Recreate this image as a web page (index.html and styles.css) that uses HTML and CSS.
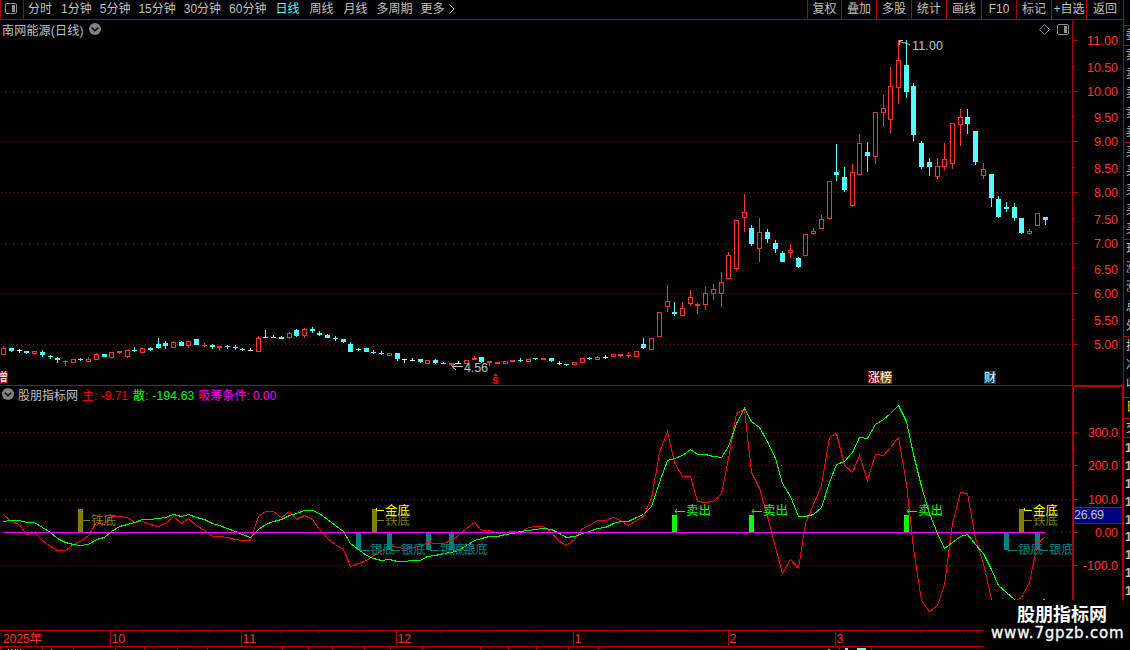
FILE: index.html
```html
<!DOCTYPE html>
<html lang="zh-CN">
  <head>
    <meta charset="UTF-8" />
    <meta name="viewport" content="width=device-width, initial-scale=1.0" />
    <title>南网能源(日线)</title>
    <link rel="stylesheet" href="styles.css">
  </head>
  <body>
    <div class="terminal">
      <div class="main">
        <header class="toolbar">
          <div class="panel-toggle">
            <svg width="13" height="11" viewBox="0 0 13 11">
              <rect x="0.5" y="0.5" width="11" height="10" rx="1.5" fill="none" stroke="#909090" />
              <rect x="7" y="2" width="3" height="7" fill="#909090" />
            </svg>
          </div>
          <nav class="periods">
            <span class="short">分时</span>
            <span>1分钟</span>
            <span>5分钟</span>
            <span>15分钟</span>
            <span>30分钟</span>
            <span>60分钟</span>
            <span class="short active">日线</span>
            <span class="short">周线</span>
            <span class="short">月线</span>
            <span>多周期</span>
            <span>更多</span>
            <svg class="more" width="6" height="10" viewBox="0 0 6 10">
              <path d="M0.5 0.5 L5 5 L0.5 9.5" fill="none" stroke="#c0c0c0" />
            </svg>
          </nav>
          <div class="tools">
            <span>复权</span>
            <span>叠加</span>
            <span>多股</span>
            <span>统计</span>
            <span>画线</span>
            <span>F10</span>
            <span>标记</span>
            <span>+自选</span>
            <span>返回</span>
          </div>
        </header>

        <section class="pane price-pane">
          <div class="pane-title">
            <span>南网能源(日线)</span>
            <svg class="chevron" width="12" height="12" viewBox="0 0 12 12">
              <circle cx="6" cy="6" r="6" fill="#808080" />
              <path d="M2.8 4.6 L6 7.8 L9.2 4.6" fill="none" stroke="#101010" stroke-width="1.5" />
            </svg>
          </div>
          <div class="pane-tools">
            <svg width="11" height="11" viewBox="0 0 11 11">
              <path d="M5.5 0.5 L10.5 5.5 L5.5 10.5 L0.5 5.5 Z" fill="none" stroke="#808080" />
            </svg>
            <svg width="12" height="11" viewBox="0 0 12 11">
              <rect x="0.5" y="0.5" width="11" height="10" rx="1.5" fill="none" stroke="#909090" />
              <rect x="7" y="2" width="3" height="7" fill="#909090" />
            </svg>
          </div>
          <svg id="price" width="1072" height="365" viewBox="0 20 1072 365"></svg>
          <svg id="price-axis" width="51" height="365" viewBox="1072 20 51 365"></svg>
          <span class="badge zeng">增</span>
          <span class="badge zhang">涨</span>
          <span class="badge bang">榜</span>
          <span class="badge cai">财</span>
        </section>

        <section class="pane indicator-pane">
          <div class="pane-title">
            <svg class="chevron" width="12" height="12" viewBox="0 0 12 12">
              <circle cx="6" cy="6" r="6" fill="#808080" />
              <path d="M2.8 4.6 L6 7.8 L9.2 4.6" fill="none" stroke="#101010" stroke-width="1.5" />
            </svg>
            <span>股朋指标网</span>
            <span class="v-main">主: -9.71</span>
            <span class="v-retail">散: -194.63</span>
            <span class="v-cond">吸筹条件: 0.00</span>
          </div>
          <svg id="indicator" width="1072" height="244" viewBox="0 386 1072 244"></svg>
          <svg id="indicator-axis" width="52" height="245" viewBox="1072 385 52 245"></svg>
        </section>

        <footer>
          <svg id="timeline" width="1123" height="20" viewBox="0 630 1123 20"></svg>
        </footer>
      </div>

      <aside class="quote">
        <div class="group head"><span>委</span></div>
        <div class="group"><span>卖</span><span>卖</span><span>卖</span><span>卖</span><span>卖</span></div>
        <div class="group"><span>买</span><span>买</span><span>买</span><span>买</span><span>买</span></div>
        <div class="group"><span>现</span><span>涨</span><span>涨</span><span>总</span><span>外</span></div>
        <div class="group stats"><span>换</span><span>净</span><span>收</span></div>
        <div class="group tab"><span>日</span></div>
        <div class="group deal"><span>交</span></div>
        <div class="ticks"><span>1</span><span>1</span><span>1</span><span>1</span><span>1</span><span>1</span><span>1</span><span>1</span><span>1</span></div>
      </aside>

      <div class="watermark">
        <strong>股朋指标网</strong>
        <span>www.7gpzb.com</span>
      </div>
    </div>
    <script src="script.js"></script>
  </body>
</html>
```
FILE: styles.css
```css
body {
  margin: 0;
  background: #000;
  color: #c0c0c0;
  font-family: "Liberation Sans", "Noto Sans CJK SC", sans-serif;
  font-size: 12px;
}
svg {
  display: block;
  flex: none;
}
svg text {
  font-family: "Liberation Sans", "Noto Sans CJK SC", sans-serif;
}
.terminal {
  position: relative;
  display: flex;
  width: 1130px;
  height: 650px;
  overflow: hidden;
}
.main {
  width: 1123px;
  flex: none;
}

/* toolbar */
.toolbar {
  display: flex;
  height: 19px;
  line-height: 19px;
  border-bottom: 1px solid #b00000;
}
.panel-toggle {
  box-sizing: border-box;
  width: 24px;
  padding: 3px 0 0 4px;
  border-left: 1px solid #b00000;
  border-right: 1px solid #b00000;
}
.periods {
  display: flex;
  gap: 8px;
  margin-left: 3px;
}
.periods .short {
  padding: 0 1px;
}
.periods .active {
  color: #54fcfc;
}
.periods .more {
  margin: 4px 0 0 -4px;
}
.tools {
  display: flex;
  margin-left: auto;
}
.tools span {
  box-sizing: border-box;
  width: 35px;
  border-left: 1px solid #b00000;
  text-align: center;
  white-space: nowrap;
}
.tools span:first-child {
  width: 34px;
}
.tools span:last-child {
  width: 37px;
}

/* panes */
.pane {
  position: relative;
  display: flex;
}
.price-pane {
  height: 365px;
  border-bottom: 1px solid #b00000;
}
.indicator-pane {
  height: 244px;
}
#indicator-axis {
  margin-top: -1px;
}
.pane-title {
  position: absolute;
  top: 0;
  left: 2px;
  display: flex;
  align-items: center;
  gap: 5px;
  height: 18px;
  white-space: nowrap;
}
.price-pane .pane-title {
  letter-spacing: 0.2px;
}
.indicator-pane .pane-title {
  top: -1px;
  gap: 4px;
}
.v-main {
  color: #f00;
}
.v-retail {
  color: #0f0;
  margin-left: 1px;
  letter-spacing: 0.2px;
}
.v-cond {
  color: #f0f;
}
.pane-tools {
  position: absolute;
  top: 4px;
  left: 1039px;
  display: flex;
  gap: 7px;
}
.badge {
  position: absolute;
  top: 351px;
  width: 12px;
  height: 13px;
  line-height: 14px;
  color: #fff;
}
.zeng { left: -4px; background: #800000; }
.zhang { left: 868px; background: #800000; }
.bang { left: 880px; background: #804000; }
.cai { left: 984px; background: #003c70; }

/* clipped quote column */
.quote {
  width: 7px;
  height: 650px;
  border-left: 1px solid #b00000;
  overflow: hidden;
  padding-top: 25px;
  box-sizing: border-box;
}
.group {
  box-sizing: border-box;
  height: 97px;
  border-top: 1px solid #b00000;
  padding-left: 2px;
}
.group span {
  display: block;
  width: 12px;
  height: 19.2px;
  line-height: 19px;
}
.group.head { height: 20px; }
.group.stats { height: 61px; }
.group.tab { height: 21px; color: #e0e000; }
.group.deal { height: 20px; border-bottom: 1px solid #b00000; }
.ticks span {
  display: block;
  height: 17.9px;
  line-height: 20px;
  padding-left: 1px;
  font-weight: bold;
}

.watermark {
  position: absolute;
  left: 984px;
  top: 600px;
  width: 146px;
  height: 50px;
  background: #000;
  color: #fff;
  display: flex;
  flex-direction: column;
  white-space: nowrap;
}
.watermark strong {
  margin-left: 33px;
  font-size: 18px;
  line-height: 26px;
  height: 24px;
  font-family: "Noto Sans CJK SC", sans-serif;
}
.watermark span {
  margin-left: 7px;
  font-family: "DejaVu Sans", sans-serif;
  font-size: 15px;
  line-height: 19px;
  letter-spacing: 0.8px;
  -webkit-text-stroke: 0.3px #fff;
}
```
FILE: script.js
```js
const NS = "http://www.w3.org/2000/svg";
const RED = "#ff3232", CYAN = "#54fcfc", LINE = "#b00000";

function add(svg, tag, attrs, text) {
  const el = document.createElementNS(NS, tag);
  for (const k in attrs) el.setAttribute(k, attrs[k]);
  if (text) el.textContent = text;
  svg.appendChild(el);
  return el;
}
function box(svg, x, y, width, height, fill) {
  add(svg, "rect", { x, y, width, height, fill });
}
function label(svg, x, y, text, fill, len, size) {
  add(svg, "text", { x, y, fill, "font-size": size || 12, textLength: len }, text);
}
function grid(svg, y) {
  add(svg, "path", { d: `M1 ${y + 0.5}H1072`, stroke: "#8c0c0c", "stroke-dasharray": "1 3", "shape-rendering": "crispEdges" });
}
const slot = i => Math.floor(3.75 + i * 7.713);

// colour, high, body top, body bottom, low
const candles = `r346 348 355 355,c348 348 351 352,w349 350 351 353,c351 351 353 354,r351 351 354 355,c350 352 355 357
c355 356 357 359,c357 358 360 363,r360 361 362 366,r359 359 363 363,c358 359 360 361,r357 359 362 362
r353 354 360 360,c354 354 357 357,r352 352 358 358,r351 351 353 354,r350 350 357 358,c347 350 351 352
r348 348 353 353,c347 348 350 351,c338 344 348 349,c341 343 346 349,r341 342 348 348,c341 342 346 346
r341 341 346 348,c339 339 345 345,r343 345 346 347,c344 345 347 349,r346 346 348 351,c345 346 347 349
c345 347 348 350,c348 349 350 351,w348 350 351 351,r336 338 352 352,c330 337 338 338,c335 337 338 338
c336 337 339 339,r332 333 338 339,c329 330 336 337,r328 329 336 338,c327 329 331 333,c331 333 335 336
c334 335 338 338,c336 338 339 341,c339 339 342 343,c342 344 352 352,c348 349 350 351,c348 348 352 352
c350 352 353 354,c351 353 354 355,r353 353 356 356,c353 353 359 361,w359 359 360 363,w358 360 361 361
c359 359 362 363,r360 360 364 364,c359 360 363 364,c362 363 364 364,r363 363 365 366,w361 363 364 364
r360 360 364 364,r356 358 360 360,c357 357 362 363,r361 361 363 366,r362 362 364 364,r361 361 364 364
r360 360 362 362,c358 360 361 362,r359 359 362 362,c358 358 359 360,r358 358 360 360,c358 358 361 362
c361 363 364 365,c364 364 365 366,r362 362 365 365,r358 358 363 363,c357 358 359 360,r356 357 360 360
w355 357 358 359,r354 354 357 357,r354 354 356 357,r352 355 356 358,r351 351 357 357,c338 344 348 349
r338 338 350 350,r312 312 337 337,r285 301 307 312,c302 312 314 316,r302 308 316 316,r290 297 304 306
r303 304 306 314,r287 293 305 310,r284 289 294 300,r272 282 294 307,r252 255 279 279,r220 220 269 271
r194 212 218 232,c225 228 244 246,r218 232 249 262,c229 232 239 243,c240 243 249 253,c251 253 262 262
r244 250 253 258,c257 258 267 268,r234 234 256 256,r228 231 234 235,r215 219 229 229,r181 181 219 220
c144 172 175 181,c167 177 190 192,r164 172 206 207,r134 143 175 175,c142 152 156 172,r112 112 157 164
r95 108 113 127,r67 86 120 133,r40 60 88 104,c40 65 92 98,c83 86 135 141,c141 143 167 169
c158 162 167 176,r158 166 177 179,r143 159 167 170,r123 123 164 169,r109 117 125 146,c109 117 124 134
c131 131 162 165,r163 169 176 179,c174 174 198 207,c196 199 217 218,c202 207 209 212,c203 207 218 221
c218 218 233 234,r229 231 234 235,r213 213 226 226,c217 217 220 225`.split(/[,\n]/);

const price = document.getElementById("price");
[91, 141, 192, 243, 293, 344].forEach(y => grid(price, y));
candles.forEach((row, i) => {
  const [hi, top, bot, lo] = row.slice(1).split(" ").map(Number);
  const x = slot(i);
  const color = { r: RED, c: CYAN, w: "#fff" }[row[0]];
  if (hi < top) box(price, x, hi, 1, top - hi, color);
  if (lo > bot) box(price, x, bot, 1, lo - bot, color);
  if (row[0] === "r" && bot - top > 2) {
    add(price, "rect", { x: x - 1.5, y: top + 0.5, width: 4, height: bot - top - 1, fill: "none", stroke: color });
  } else {
    box(price, x - 2, top, 5, bot - top, color);
  }
});
add(price, "path", { d: "M903 40.5H899.500V45M899 41L903 43L906 43L910 45", fill: "none", stroke: "#c0c0c0" });
label(price, 912, 50, "11.00", "#c0c0c0", 31, 12.5);
add(price, "path", { d: "M463 366.500H452M456 363L452 366.500L456 370", fill: "none", stroke: "#c0c0c0" });
label(price, 464, 372, "4.56", "#c0c0c0", 24, 12.5);
add(price, "path", { d: "M493 376L495.500 373L498 376Z", fill: "#f00" });
add(price, "text", { x: 492, y: 384, fill: "#f00", "font-size": 12, "font-weight": "bold" }, "s");

const pAxis = document.getElementById("price-axis");
box(pAxis, 1072, 20, 1, 365, LINE);
[40, 91, 141, 192, 243, 293, 344].forEach(y => box(pAxis, 1073, y, 5, 1, LINE));
[66, 116, 167, 218, 268, 319].forEach(y => box(pAxis, 1073, y, 2, 1, LINE));
[["11.00", 45], ["10.50", 72], ["10.00", 96], ["9.50", 122], ["9.00", 146], ["8.50", 173], ["8.00", 197],
 ["7.50", 224], ["7.00", 248], ["6.50", 274], ["6.00", 298], ["5.50", 325], ["5.00", 349]].forEach(([t, y]) => {
  const w = t.length === 5 ? 31 : 24;
  label(pAxis, 1118 - w, y, t, RED, w, 12.5);
});

// indicator
const mainLine = [514, 521, 524, 534, 532, 540, 546, 550, 550, 544, 541, 535, 522, 524, 516, 516, 517, 522, 521, 524,
  526, 523, 516, 523, 518, 525, 530, 536, 536, 537, 539, 540, 540, 516, 511, 511, 517, 511, 519, 515,
  519, 529, 538, 544, 549, 566, 563, 560, 555, 551, 545, 547, 548, 547, 546, 542, 543, 543, 540, 535,
  528, 522, 530, 530, 533, 532, 531, 532, 527, 526, 526, 532, 541, 545, 539, 528, 525, 520, 520, 517,
  520, 525, 520, 516, 498, 452, 431, 462, 476, 476, 501, 502, 501, 493, 458, 413, 409, 472, 488, 516,
  547, 573, 559, 568, 523, 504, 485, 437, 433, 465, 472, 455, 480, 454, 455, 447, 437, 483, 548, 600,
  611, 605, 584, 523, 492, 493, 538, 563, 599, 620, 625, 601, 597, 582, 543, 536];
const retailLine = [521, 520, 520, 522, 522, 527, 532, 538, 542, 544, 545, 544, 539, 537, 531, 526, 524, 522, 519, 519,
  518, 517, 514, 516, 514, 517, 519, 523, 525, 528, 531, 534, 537, 529, 524, 521, 519, 515, 513, 510,
  510, 513, 519, 525, 531, 543, 549, 555, 558, 560, 559, 561, 561, 560, 560, 556, 555, 553, 552, 550,
  545, 540, 538, 536, 536, 534, 533, 531, 530, 529, 528, 529, 533, 537, 536, 533, 531, 528, 527, 523,
  521, 521, 517, 514, 506, 482, 460, 458, 455, 449, 454, 454, 456, 457, 446, 423, 408, 421, 427, 441,
  458, 483, 496, 516, 516, 514, 507, 482, 464, 461, 452, 437, 438, 424, 419, 413, 405, 421, 454, 486,
  513, 533, 548, 542, 536, 534, 544, 553, 569, 585, 592, 599, 605, 607, 604, 598];

const ind = document.getElementById("indicator");
[432, 465, 499, 532, 565].forEach(y => grid(ind, y));
function curve(values, stroke) {
  const points = values.map((y, i) => `${slot(i) + 0.5},${y + 0.5}`).join(" ");
  add(ind, "polyline", { points, fill: "none", stroke, "shape-rendering": "crispEdges" });
}
[78, 372, 1019].forEach(x => box(ind, x, 509, 5, 23, "#808000"));
[356, 387, 426, 449, 1004, 1035].forEach(x => box(ind, x, 533, 5, 17, "#008080"));
[672, 749, 904].forEach(x => box(ind, x, 515, 5, 17, "#0f0"));
curve(mainLine, "#f00");
curve(retailLine, "#0f0");
box(ind, 3, 532, 1042, 1, "#f0f");

[91, 385, 1033].forEach(x => {
  box(ind, x - 9, 520, 8, 1, "#808000");
  label(ind, x, 524.5, "铁底", "#808000", 25, 12.5);
});
[385, 1033].forEach(x => {
  box(ind, x - 9, 510, 8, 1, "#ff0");
  box(ind, x - 9, 508, 1, 3, "#ff0");
  label(ind, x, 514.5, "金底", "#ff0", 25, 12.5);
});
[370, 401, 440, 463, 1018, 1049].forEach(x => {
  box(ind, x - 10, 550, 9, 1, "#008080");
  label(ind, x, 554, "银底", "#008080", 25, 12.5);
});
[686, 763, 918].forEach(x => {
  add(ind, "path", { d: `M${x - 1} 511.5H${x - 11}M${x - 9} 509L${x - 11} 511.5L${x - 9} 513`, fill: "none", stroke: "#0f0" });
  label(ind, x, 515, "卖出", "#0f0", 25, 12.5);
});

const iAxis = document.getElementById("indicator-axis");
box(iAxis, 1072, 385, 52, 2, LINE);
box(iAxis, 1072, 385, 2, 245, LINE);
box(iAxis, 1122, 385, 2, 245, LINE);
[432, 465, 499, 532, 565].forEach(y => box(iAxis, 1074, y, 4, 1, LINE));
[449, 482, 549].forEach(y => box(iAxis, 1074, y, 1, 1, LINE));
[["300.0", 437, 30], ["200.0", 470, 30], ["100.0", 504, 30], ["0.00", 537, 23], ["-100.0", 570, 35]].forEach(([t, y, w]) => {
  label(iAxis, 1118 - w, y, t, RED, w, 12.5);
});
box(iAxis, 1074, 507, 48, 17, LINE);
box(iAxis, 1074, 508, 48, 15, "#000080");
label(iAxis, 1074, 519, "26.69", "#c0c0c0", 30, 12.5);

// time scale
const time = document.getElementById("timeline");
box(time, 0, 630, 1123, 1, LINE);
box(time, 0, 646, 1123, 1, LINE);
[143, 176, 208, 280, 319, 357, 440, 485, 529, 613, 651, 690, 770, 805, 878, 920, 963].forEach(x => box(time, x, 631, 1, 2, LINE));
[0, 42, 73, 115, 144, 177, 207, 282, 308, 332, 364, 390, 422, 480, 508, 536, 568, 598, 839, 871].forEach(x => box(time, x, 647, 1, 3, LINE));
label(time, 3, 643, "2025年", RED, 39, 12.5);
[[110, "10"], [241, "11"], [396, "12"], [573, "1"], [728, "2"], [835, "3"]].forEach(([x, t]) => {
  box(time, x, 631, 1, 15, LINE);
  label(time, x + 1.5, 643, t, RED, t.length * 6.8, 12.5);
});
[[8, 1], [11, 1], [15, 1], [17, 1], [20, 1], [51, 1], [828, 2]].forEach(([x, w]) => box(time, x, 649, w, 1, "#c0c0c0"));
[[845, 3], [857, 9]].forEach(([x, w]) => box(time, x, 648, w, 2, CYAN));
```
